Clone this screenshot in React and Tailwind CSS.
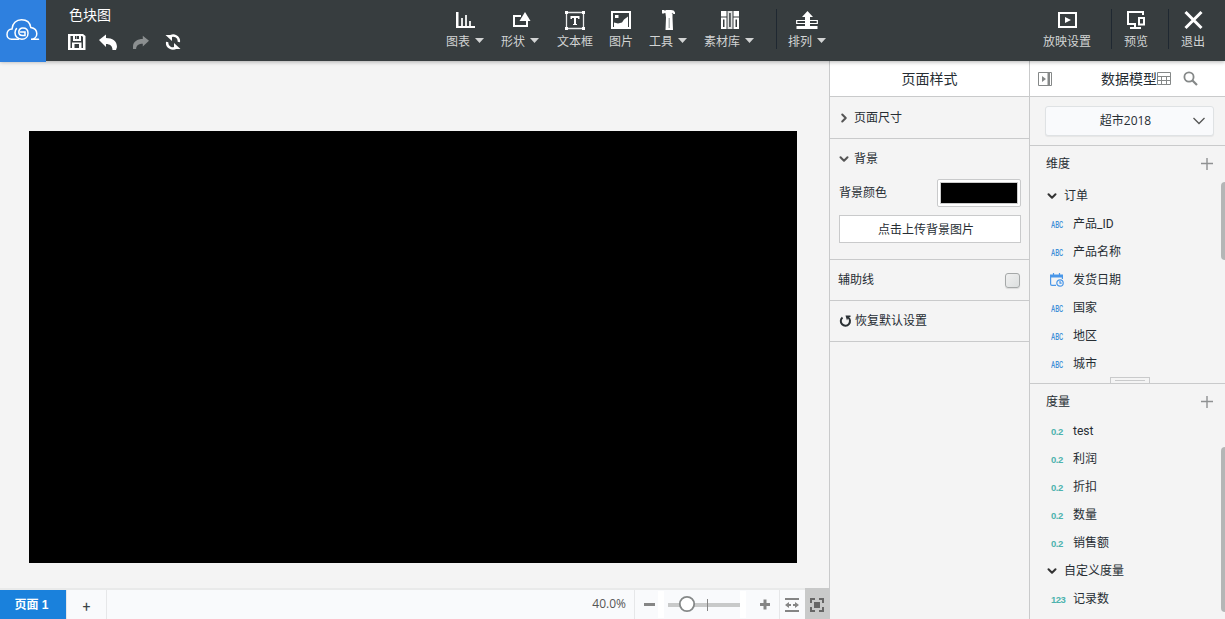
import clsx from 'clsx';
import { ChevronDown, ChevronRight } from 'lucide-react';

const ChartIcon = () => (
    <svg width="22" height="22" viewBox="0 0 22 22" fill="#fff">
        <path d="M2 3h2.500v14H21v2H2z" />
        <path d="M7 9h2v8H7zM11 6h2v11h-2zM15 12h2v5h-2z" fill="#e4e6e6" />
    </svg>
);

const ShapeIcon = () => (
    <svg width="22" height="22" viewBox="0 0 22 22">
        <path d="M12 7H5v10h13v-5" fill="none" stroke="#fff" strokeWidth="2" />
        <path d="M16 3l5.500 9h-11z" fill="#fff" />
    </svg>
);

const TextIcon = () => (
    <svg width="22" height="22" viewBox="0 0 22 22" fill="#fff">
        <path d="M2.500 3.500h17v16h-17z" fill="none" stroke="#e8eaea" strokeWidth="1.300" />
        <path d="M1 2h3v3H1zM18 2h3v3h-3zM1 18h3v3H1zM18 18h3v3h-3z" />
        <path d="M6.500 7h9v3H14V9h-2v6h1v1H9v-1h1V9H8v1H6.500z" />
    </svg>
);

const ImageIcon = () => (
    <svg width="22" height="22" viewBox="0 0 22 22" fill="#fff">
        <path d="M2 3h18v16H2z" fill="none" stroke="#fff" strokeWidth="2" />
        <path d="M5 6h3.500v3H5zM4 13.500l4 1 4-1 2-3 4-3V18H4z" />
    </svg>
);

const ToolIcon = () => (
    <svg width="22" height="22" viewBox="0 0 22 22" fill="#fff">
        <path d="M5 1h2l1 .8L9 1h5c2 0 3.500.8 4 2.500V5h-1.500l-1.200-1.200-.8 1.200H9L8 3.800l-1 .7H5z" />
        <path d="M8.500 4.500H15.500v4l.5 12.500H8.500L9 8.500z" />
        <path d="M11.500 9h1.500v10h-1.500z" fill="#aeb3b3" />
    </svg>
);

const LibraryIcon = () => (
    <svg width="22" height="22" viewBox="0 0 22 22" fill="#fff">
        <path d="M3 2h5.500v5.500H3zM3 8.500h5.500V20H3zm2 2V18h1.500v-7.500z" fillRule="evenodd" />
        <path d="M9.500 2h5v18h-5zm1.700 2v14h1.500V4z" fillRule="evenodd" fill="#dfe1e1" />
        <path d="M15.500 2H21v5.500h-5.500zM15.500 8.500H21V20h-5.500zm2 2V18H19v-7.500z" fillRule="evenodd" />
    </svg>
);

const ArrangeIcon = () => (
    <svg width="22" height="22" viewBox="0 0 22 22" fill="#fff">
        <path d="M.7 11.500h20.600v3H.7z" fill="none" stroke="#fff" strokeWidth="1.200" />
        <path d="M11.500 2L17 8h-3v9h7.500v3H.5v-3H9V8H6z" />
    </svg>
);

const PlayIcon = () => (
    <svg width="22" height="22" viewBox="0 0 22 22">
        <path d="M3 4h17v14H3z" fill="none" stroke="#fff" strokeWidth="2" />
        <path d="M9 8l6 3-6 3z" fill="#fff" />
    </svg>
);

const PreviewIcon = () => (
    <svg width="22" height="22" viewBox="0 0 22 22" fill="none" stroke="#fff" strokeWidth="2">
        <path d="M18 6V3H3v12h7" />
        <path d="M14 9h5v6.500h-5zM10 14v5M5 19h11" />
    </svg>
);

const ExitIcon = () => (
    <svg width="22" height="22" viewBox="0 0 22 22" stroke="#fff" strokeWidth="3">
        <path d="M3.500 3l16 16M19.500 3l-16 16" />
    </svg>
);

const Caret = () => (
    <svg width="9" height="5" viewBox="0 0 9 5" className="mb-[4px] shrink-0" fill="#d2d4d4">
        <path d="M0 0h9L4.500 5z" />
    </svg>
);

const ToolButton = ({ icon: Icon, label, caret, className }) => (
    <div className={clsx('flex shrink-0', className)}>
        <button className="flex flex-col items-center pt-[9px] text-xs leading-[22px] text-[#d2d4d4]">
            <Icon />
            <span className="flex items-center gap-[5px] whitespace-nowrap">
                {label}
                {caret && <Caret />}
            </span>
        </button>
    </div>
);

const Separator = () => <div className="mt-[9px] h-10 w-px shrink-0 bg-[#1f2831]" />;

const Logo = () => (
    <div className="h-[62px] w-[46px] shrink-0 bg-[#2e80df]">
        <svg width="46" height="62" viewBox="0 0 46 62" fill="none" stroke="#fff" strokeWidth="1.500" strokeLinecap="round">
            <path d="M20.500 32H25v3.500h-2.500c-2.200 0-3.700-1.500-3.700-3.500 0-2.400 1.700-4 4-4 3.300 0 5.200 2.300 5.200 5.200 0 3.600-2.600 6-6.200 6-4 0-6.800-3-6.800-6.500 0-1.800.6-3 1.500-4.200" />
            <path d="M18.500 39.200h-7C8.700 39.200 7 37 7 34.400c0-3.200 2.200-5.300 5-5.400.3-5.600 4.300-9.200 9.500-9.200 5 0 8.600 3 9.300 7.700 3.600.6 6 3.100 6 6.200 0 3-2.300 5.500-5.800 5.500h7.500" />
        </svg>
    </div>
);

const Header = () => (
    <header className="relative z-10 flex h-[61px] bg-[#373d3f] shadow-[0_1px_4px_rgba(0,0,0,0.3)]">
        <Logo />
        <div className="ml-[22px] w-[378px]">
            <div className="pt-[5px] pl-px text-sm leading-5 text-white">色块图</div>
            <div className="flex items-center pt-[8px]">
                <svg width="18" height="18" viewBox="0 0 18 18" className="mr-[13px]" fill="#fff">
                    <path fillRule="evenodd" d="M0 1h15l2.500 2v14H0zm2.500 2v12H4V9.500h9.500V15H15V4l-1-1h-1v5H5V3zM7 3v3h1.500V3zm4 0H9v3h2zM6.500 11v4H11v-4z" />
                </svg>
                <svg width="18" height="18" viewBox="0 0 18 18" className="mr-[16px]" fill="#fff">
                    <path d="M0 7L7 1.500V5c6.500 0 11 3 11 9l-1 3h-3.500c0-4-2.500-6-6.500-6v3z" />
                </svg>
                <svg width="16" height="18" viewBox="0 0 18 18" className="mr-[16px]" fill="#8b8f90">
                    <path d="M18 7.500L11 2v3.500C5 5.500 0 8.500 0 14v3h3.500c0-4 3-6 7.500-6V14z" />
                </svg>
                <svg width="16" height="18" viewBox="0 0 16 18" fill="none" stroke="#fff" strokeWidth="2.400">
                    <path d="M4.500 4A5.600 5.600 0 0 1 13.800 9M11.500 14A5.600 5.600 0 0 1 2.200 9" />
                    <path d="M.5 2h6.500v6zM15.500 16H9v-6z" fill="#fff" stroke="none" />
                </svg>
            </div>
        </div>
        <ToolButton icon={ChartIcon} label="图表" caret className="w-[55px]" />
        <ToolButton icon={ShapeIcon} label="形状" caret className="w-14" />
        <ToolButton icon={TextIcon} label="文本框" className="w-[52px]" />
        <ToolButton icon={ImageIcon} label="图片" className="w-10" />
        <ToolButton icon={ToolIcon} label="工具" caret className="w-[55px]" />
        <ToolButton icon={LibraryIcon} label="素材库" caret className="w-[72px]" />
        <Separator />
        <ToolButton icon={ArrangeIcon} label="排列" caret className="ml-[11px] w-[255px]" />
        <ToolButton icon={PlayIcon} label="放映设置" className="w-[68px]" />
        <Separator />
        <ToolButton icon={PreviewIcon} label="预览" className="ml-3 w-11" />
        <Separator />
        <ToolButton icon={ExitIcon} label="退出" className="ml-3" />
    </header>
);

const BottomBar = () => (
    <footer className="flex h-[31px] items-stretch border-t-2 border-[#e9eaea] bg-[#f9fafc] text-xs text-[#3c4347]">
        <div className="flex w-[66px] items-center justify-center bg-[#1a81dc] pt-px pr-[3px] font-['Liberation_Sans','Noto_Sans_CJK_SC',sans-serif] font-bold text-white">
            页面 1
        </div>
        <div className="flex w-[41px] items-center justify-center border-x border-[#e6e7e9] pt-1 text-sm">+</div>
        <div className="flex flex-1 items-center justify-end pr-2 pb-0.5 font-['Open_Sans','Noto_Sans_CJK_SC',sans-serif] text-[#555]">40.0%</div>
        <div className="flex w-[145px] items-center border-l border-[#e6e7e9]">
            <svg width="144" height="27" viewBox="0 0 144 27">
                <path d="M23 0h6v27h-6zM105 0h6v27h-6z" fill="#fff" />
                <path d="M9 12h11v3H9zM125 12h10v3h-10zM128.500 8.500h3v10h-3z" fill="#858585" />
                <path d="M33 12h72v4H33z" fill="#c8c9c9" />
                <path d="M72.500 8v12" stroke="#858585" />
                <circle cx="52" cy="13" r="7.200" fill="#fff" stroke="#858888" strokeWidth="1.800" />
            </svg>
        </div>
        <div className="flex w-[26px] items-center justify-center border-l border-[#e6e7e9] pr-0.5">
            <svg width="16" height="16" viewBox="0 0 16 16" fill="#858585">
                <path d="M1 1h14v2H1zM1 13h14v2H1zM1 8l4-3v2h2v2H5v2zM15 8l-4-3v2H9v2h2v2z" />
            </svg>
        </div>
        <div className="-mt-0.5 flex w-6 items-center justify-center bg-[#c9caca] pt-0.5">
            <svg width="16" height="16" viewBox="0 0 16 16">
                <path d="M2 6V2h4M10 2h4v4M14 10v4h-4M6 14H2v-4" fill="none" stroke="#666" strokeWidth="2" />
                <path d="M5 5h6v6H5z" fill="#666" />
            </svg>
        </div>
    </footer>
);

const StylePanel = () => (
    <aside className="w-[201px] shrink-0 border-x border-[#c9cacb]">
        <div className="flex h-9 items-center justify-center border-b border-[#c9cacb] bg-white text-sm">页面样式</div>
        <div className="flex h-[42px] items-center gap-[3px] border-b border-[#c9cacb] pl-[7px]">
            <ChevronRight className="h-3.5 w-3.5" strokeWidth={3.5} color="#555" />
            页面尺寸
        </div>
        <div className="h-[121px] border-b border-[#c9cacb] pr-2 pl-[9px]">
            <div className="-ml-0.5 flex h-10 items-center gap-[3px]">
                <ChevronDown className="h-3.5 w-3.5" strokeWidth={3.5} color="#555" />
                背景
            </div>
            <div className="flex h-7 items-center justify-between">
                背景颜色
                <div className="h-7 w-[84px] rounded-xs border border-[#c9cacb] bg-white p-0.5">
                    <div className="h-full border border-[#ccc] bg-black" />
                </div>
            </div>
            <button className="mt-2 flex h-7 w-full items-center justify-center border border-[#c9cacb] bg-white pt-0.5 pr-2">
                点击上传背景图片
            </button>
        </div>
        <div className="flex h-[41px] items-center justify-between border-b border-[#c9cacb] px-2">
            辅助线
            <span className="mt-px mr-px h-[15px] w-[15px] rounded-[3px] border border-[#a5a8a8] bg-linear-to-br from-[#f0f0f0] to-[#dcdfdf] shadow-[0_1px_1px_rgba(0,0,0,0.1)]" />
        </div>
        <div className="flex h-[41px] items-center gap-[3px] border-b border-[#c9cacb] pl-[9px]">
            <svg width="13" height="13" viewBox="0 0 13 13">
                <path d="M3.500 2.500a4.600 4.600 0 1 0 5.500-.2" fill="none" stroke="#2a3034" strokeWidth="2" />
                <path d="M6.500.5h5v1.500h-2L8 5.500z" fill="#2a3034" />
            </svg>
            恢复默认设置
        </div>
    </aside>
);

const PlusIcon = () => (
    <svg width="12" height="12" viewBox="0 0 12 12" stroke="#8f9192" strokeWidth="1.400">
        <path d="M6 0v12M0 5.500h12" />
    </svg>
);

const DateIcon = () => (
    <svg width="14" height="14" viewBox="0 0 14 14" fill="none" stroke="#4a97e8" strokeWidth="1.200">
        <path d="M6 12.400H2c-.8 0-1.400-.6-1.400-1.400V2.500h11.800V6" />
        <path d="M.6 2h11.800v2H.6zM3.500 0v3M9.500 0v3" fill="#4a97e8" />
        <circle cx="10" cy="10" r="3.200" />
        <path d="M10 8v2.200h1.700" />
    </svg>
);

const FieldType = ({ type }) => {
    if (type === 'date') return <DateIcon />;
    if (type === 'text') {
        return <span className="inline-block origin-left scale-x-[0.66] text-[9.5px] font-medium text-[#3f8fd8]">ABC</span>;
    }
    return (
        <span className="inline-block font-['Liberation_Sans',sans-serif] text-[9.5px] font-bold tracking-[-0.5px] text-[#4db3ae]">
            {type === 'int' ? '123' : '0.2'}
        </span>
    );
};

const Field = ({ type, name }) => (
    <div className="flex h-7 items-center pl-[21px]">
        <div className={clsx('-ml-px flex w-[23px] shrink-0 items-center', type !== 'date' && 'pt-0.5 pl-px')}>
            <FieldType type={type} />
        </div>
        {name}
    </div>
);

const FieldGroup = ({ name }) => (
    <div className="flex h-7 items-center gap-[5px] pl-[15px]">
        <ChevronDown className="h-3.5 w-3.5" strokeWidth={3.5} color="#333" />
        {name}
    </div>
);

const dimensions = [
    { name: '产品_ID', type: 'text' },
    { name: '产品名称', type: 'text' },
    { name: '发货日期', type: 'date' },
    { name: '国家', type: 'text' },
    { name: '地区', type: 'text' },
    { name: '城市', type: 'text' },
];

const measures = ['test', '利润', '折扣', '数量', '销售额'];

const DataPanel = () => (
    <aside className="flex min-w-0 flex-1 flex-col overflow-hidden">
        <div className="flex h-9 shrink-0 items-center border-b border-[#c9cacb] bg-white pl-2 text-sm">
            <svg width="14" height="14" viewBox="0 0 14 14" className="mr-[49px]">
                <path d="M.5.5h13v13H.5z" fill="none" stroke="#858888" />
                <path d="M4 4l4 3-4 3zM9.500 1h2.500v12H9.500z" fill="#858888" />
            </svg>
            数据模型
            <svg width="14" height="14" viewBox="0 0 14 14" className="mr-3" fill="none" stroke="#858888">
                <path d="M.5.500h13v12H.5zM.5 4.500h13M.5 8.500h13M4.500 4.500v8M9.500 4.500v8" />
            </svg>
            <svg width="15" height="15" viewBox="0 0 15 15" fill="none" stroke="#858888">
                <circle cx="6" cy="6" r="4.600" strokeWidth="1.800" />
                <path d="M9.500 9.500l4.500 4.500" strokeWidth="2.200" />
            </svg>
        </div>
        <div className="h-[49px] shrink-0 border-b border-[#c9cacb] pt-[9px] pl-[15px]">
            <button className="flex h-[30px] w-[169px] items-center rounded-[3px] border border-[#dfe2e4] bg-[#f9fafc] pr-2 font-['Open_Sans','Noto_Sans_CJK_SC',sans-serif] shadow-[0_1px_1px_rgba(0,0,0,0.06)]">
                <span className="flex-1 pl-3">超市2018</span>
                <svg width="12" height="8" viewBox="0 0 12 8" fill="none" stroke="#555" strokeWidth="1.300">
                    <path d="M.5 1L6 6.500 11.500 1" />
                </svg>
            </button>
        </div>
        <section className="relative h-[238px] shrink-0 border-b border-[#c9cacb]">
            <div className="flex h-9 items-center justify-between pr-3 pl-4">
                维度
                <PlusIcon />
            </div>
            <FieldGroup name="订单" />
            {dimensions.map((field) => (
                <Field key={field.name} {...field} />
            ))}
            <div className="absolute top-9 right-0 h-[78px] w-1 rounded-l-sm bg-[#b4b6b6]" />
            <div className="absolute bottom-0 left-20 h-1.5 w-10 border border-b-0 border-[#c9cacb] px-1 pt-0.5">
                <div className="h-px bg-[#c9cacb]" />
            </div>
        </section>
        <section className="relative flex-1">
            <div className="flex h-[33px] items-center justify-between pt-0.5 pr-3 pl-4">
                度量
                <PlusIcon />
            </div>
            {measures.map((name) => (
                <Field key={name} name={name} type="number" />
            ))}
            <FieldGroup name="自定义度量" />
            <Field name="记录数" type="int" />
            <div className="absolute top-[63px] right-0 h-[165px] w-1 rounded-l-sm bg-[#b4b6b6]" />
        </section>
    </aside>
);

const App = () => (
    <div className="flex h-screen flex-col overflow-hidden bg-[#f4f4f4] font-[Roboto,'Noto_Sans_CJK_SC',sans-serif] text-xs text-[#262d33]">
        <Header />
        <div className="flex min-h-0 flex-1">
            <main className="flex w-[829px] shrink-0 flex-col">
                <div className="flex-1 pt-[70px] pl-[29px]">
                    <div className="h-[432px] w-[768px] bg-black" />
                </div>
                <BottomBar />
            </main>
            <StylePanel />
            <DataPanel />
        </div>
    </div>
);

export default App;
